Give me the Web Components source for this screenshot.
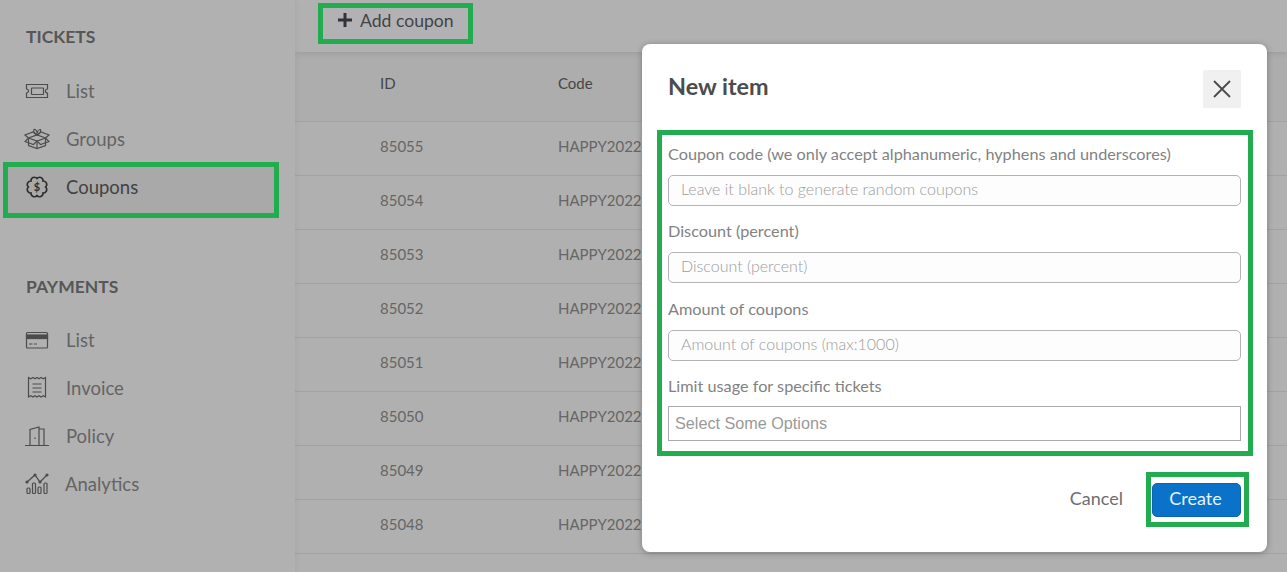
<!DOCTYPE html>
<html>
<head>
<meta charset="utf-8">
<style>
    html, body { margin: 0; height: 100%; overflow: hidden; background: #b0b0b0; font-family: Lato, "Liberation Sans", sans-serif; }
    app-shell { height: 572px; }
</style>
</head>
<body>
<app-shell>
    <side-nav slot="side">
        <nav-heading>TICKETS</nav-heading>
        <nav-item icon="ticket">List</nav-item>
        <nav-item icon="gift">Groups</nav-item>
        <nav-item icon="coupon" active>Coupons</nav-item>
        <nav-heading second>PAYMENTS</nav-heading>
        <nav-item icon="card">List</nav-item>
        <nav-item icon="invoice">Invoice</nav-item>
        <nav-item icon="door">Policy</nav-item>
        <nav-item icon="chart">Analytics</nav-item>
    </side-nav>
    <coupon-table></coupon-table>
    <new-item-modal slot="modal"></new-item-modal>
</app-shell>

<script>
// 图标
const ICONS = {
    ticket: '<path d="M2.500 6.500h21V11a2 2 0 0 0 0 4v4.500h-21V15a2 2 0 0 0 0-4z"/><rect x="7.500" y="10" width="12" height="6.500" rx=".5"/>',
    gift: '<path d="M4.500 12v7.500l8.500 3 8.500-3V12"/><path d="M13 15v7.500M4.500 12l8.500 3 8.500-3-8.500-3z"/><path d="M4.500 12 1 9l8-3 4 3 4-3 8 3-3.500 3M4.500 12 1 15.500l8.500 3L13 15l3.500 3.500 8.500-3-3.500-3.500"/><path d="M13 9c-2.500-1-4-3.500-3-5.500 2-.5 3.500 2 3 5.500zm0 0c0-3 1.500-5.500 3.500-5.500.8 2-.8 4.500-3.500 5.500z"/>',
    coupon: '<path d="M13 4.500A3.400 3.400 0 0 1 19 7 3.400 3.400 0 0 1 21.500 13 3.400 3.400 0 0 1 19 19 3.400 3.400 0 0 1 13 21.500 3.400 3.400 0 0 1 7 19 3.400 3.400 0 0 1 4.500 13 3.400 3.400 0 0 1 7 7 3.400 3.400 0 0 1 13 4.500z"/><text x="13" y="17" text-anchor="middle" font-size="11" font-weight="700" fill="currentColor" stroke="none" font-family="Lato">$</text>',
    card: '<rect x="2.500" y="5.500" width="21" height="15.500" rx="1"/><rect x="2.500" y="8" width="21" height="3.500" fill="currentColor"/><path d="M5 17h3.500M10 17h3"/>',
    invoice: '<path d="M4.500 2.500l2.200 1.200L9 2.500l2 1.200 2-1.200 2 1.200 2-1.200 2.300 1.200 2.200-1.200v19.500l-2.200-1.200-2.300 1.200-2-1.200-2 1.200-2-1.200-2 1.200-2.300-1.200-2.200 1.200z"/><path d="M8.500 9h9M8.500 13h9M8.500 17h9"/>',
    door: '<path d="M1 22.500h24M6 22.500V6.500L15 4v18.500M15 6h5v16.500M11 14.500v1.500"/>',
    chart: '<path d="M3 11l8-7 5 7 7-7"/><circle cx="3" cy="11" r="1" fill="currentColor"/><circle cx="11" cy="4" r="1" fill="currentColor"/><circle cx="16" cy="11" r="1" fill="currentColor"/><circle cx="23" cy="4" r="1" fill="currentColor"/><rect x="3" y="17" width="3" height="5.500" rx="1"/><rect x="8.500" y="12" width="3" height="10.500" rx="1"/><rect x="14" y="16" width="3" height="6.500" rx="1"/><rect x="20" y="12" width="3" height="10.500" rx="1"/>'
};

// 页面骨架
class AppShell extends HTMLElement {
    constructor() {
        super();
        this.attachShadow({mode: 'open'}).innerHTML = `
            <style>
                :host { display: grid; grid-template-columns: 295px 1fr; position: relative; overflow: hidden; }
                ::slotted(new-item-modal) { position: absolute; left: 642px; top: 44px; }
            </style>
            <slot name="side"></slot>
            <slot></slot>
            <slot name="modal"></slot>
        `;
    }
}

class SideNav extends HTMLElement {
    constructor() {
        super();
        this.attachShadow({mode: 'open'}).innerHTML = `
            <style>
                :host { display: flex; flex-direction: column; background: #b1b1b1; box-shadow: 1px 0 6px rgba(0,0,0,.06); z-index: 1; padding-top: 26px; }
            </style>
            <slot></slot>
        `;
    }
}

class NavHeading extends HTMLElement {
    constructor() {
        super();
        this.attachShadow({mode: 'open'}).innerHTML = `
            <style>
                :host { display: block; height: 21px; line-height: 21px; padding-left: 26px; margin-bottom: 20px; font-size: 17.500px; font-weight: 700; color: #575757; }
                :host([second]) { margin-top: 65px; margin-bottom: 19px; }
            </style>
            <slot></slot>
        `;
    }
}

class NavItem extends HTMLElement {
    constructor() {
        super();
        const icon = ICONS[this.getAttribute('icon')] || '';
        this.attachShadow({mode: 'open'}).innerHTML = `
            <style>
                :host { display: flex; align-items: center; gap: 16px; height: 48px; padding-left: 24px; font-size: 18.500px; color: #646464; box-sizing: border-box; }
                :host([icon="chart"]) { gap: 15px; }
                :host([active]) { color: #424242; height: 56px; margin: -1px 0 -7px 3px; width: 276px; padding: 0 0 6px 16px; border: 5px solid #22ab4f; background: #a9a9a9; }
                svg { width: 26px; height: 26px; fill: none; stroke: #4c4c4c; color: #4c4c4c; stroke-width: 1.200; flex: none; }
                :host([active]) svg { stroke: #2e2e2e; color: #2e2e2e; stroke-width: 1.600; }
            </style>
            <svg viewBox="0 0 26 26">${icon}</svg>
            <slot></slot>
        `;
    }
}

class CouponTable extends HTMLElement {
    constructor() {
        super();
        const rows = [85055, 85054, 85053, 85052, 85051, 85050, 85049, 85048];
        this.attachShadow({mode: 'open'}).innerHTML = `
            <style>
                :host { display: block; background: #b0b0b0; min-width: 0; }
                .bar { height: 52px; box-sizing: border-box; padding: 3px 0 0 23px; background: #b1b1b1; box-shadow: 0 1px 6px rgba(0,0,0,.12); position: relative; }
                .add { display: inline-flex; align-items: center; gap: 7px; box-sizing: border-box; width: 155px; height: 41px; padding: 0 0 7px 14px; border: 5px solid #22ab4f; background: #b2b2b4; color: #444; font-size: 17.600px; }
                .add svg { width: 16px; height: 16px; stroke: #333; stroke-width: 3; fill: none; flex: none; }
                .row { display: grid; grid-template-columns: 178px 1fr; height: 54px; padding: 0 0 6px 85px; align-items: center; border-bottom: 1px solid #a2a2a2; box-sizing: border-box; font-size: 15px; color: #666; }
                .head { height: 70px; color: #464646; background: #adadad; padding-bottom: 8px; }
                .code { white-space: nowrap; }
            </style>
            <div class="bar">
                <span class="add"><svg viewBox="0 0 16 16"><path d="M8 1v14M1 8h14"/></svg>Add coupon</span>
            </div>
            <div class="row head"><span>ID</span><span>Code</span></div>
            ${rows.map(id => `<div class="row"><span>${id}</span><span class="code">HAPPY2022</span></div>`).join('')}
        `;
    }
}

class FormField extends HTMLElement {
    constructor() {
        super();
        this.attachShadow({mode: 'open'}).innerHTML = `
            <style>
                :host { display: block; }
                label { display: block; height: 24px; line-height: 24px; font-size: 16.250px; color: #828282; margin-bottom: 9px; white-space: nowrap; }
                .box { box-sizing: border-box; height: 31px; line-height: 25px; padding-left: 12px; border: 1px solid #b4b4b4; border-radius: 5px; background: #fdfdfd; color: #9c9c9c; font-size: 16px; font-weight: 300; }
                :host([select]) label { margin-bottom: 8px; }
                :host([select]) .box { height: 35px; line-height: 32px; padding-left: 6px; border-radius: 0; border-color: #aaa; font-family: "Liberation Sans", sans-serif; font-size: 16.200px; font-weight: 400; color: #999; background: #fff; }
            </style>
            <label>${this.getAttribute('label')}</label>
            <div class="box"><slot></slot></div>
        `;
    }
}

class NewItemModal extends HTMLElement {
    constructor() {
        super();
        this.attachShadow({mode: 'open'}).innerHTML = `
            <style>
                :host { display: flex; flex-direction: column; box-sizing: border-box; width: 625px; height: 508px; background: #fff; border-radius: 8px; box-shadow: 0 1px 6px rgba(0,0,0,.3); font-family: Lato, sans-serif; }
                .top { display: flex; justify-content: space-between; align-items: center; height: 86px; padding: 0 26px; box-sizing: border-box; }
                h2 { margin: -2px 0 0; font-size: 23.400px; font-weight: 700; color: #4c4c4c; }
                .close { width: 38px; height: 38px; margin-top: 4px; background: #f0f0f0; border-radius: 2px; display: flex; align-items: center; justify-content: center; }
                .close svg { width: 18px; height: 18px; stroke: #4a4a4a; stroke-width: 1.800; fill: none; }
                .form { box-sizing: border-box; width: 596px; height: 326px; margin-left: 15px; border: 5px solid #22ab4f; padding: 7px 7px 0 6px; display: flex; flex-direction: column; }
                form-field + form-field { margin-top: 13.300px; }
                .foot { display: flex; justify-content: flex-end; align-items: center; gap: 23px; padding: 16px 18px 0 0; }
                .cancel { font-size: 18px; color: #6e6e6e; margin-bottom: 4px; }
                .create { box-sizing: border-box; width: 103px; height: 55px; border: 5px solid #22ab4f; padding: 6px 3px 5px 1px; background: #fff; }
                .create span { display: block; height: 34px; line-height: 29px; padding-right: 2px; text-align: center; border-radius: 5px; background: #0b72c9; border: 1px solid #0a62b0; box-sizing: border-box; color: #e8f2fb; font-size: 18px; }
            </style>
            <div class="top">
                <h2>New item</h2>
                <span class="close"><svg viewBox="0 0 18 18"><path d="M1 1l16 16M17 1L1 17"/></svg></span>
            </div>
            <div class="form">
                <form-field label="Coupon code (we only accept alphanumeric, hyphens and underscores)">Leave it blank to generate random coupons</form-field>
                <form-field label="Discount (percent)">Discount (percent)</form-field>
                <form-field label="Amount of coupons">Amount of coupons (max:1000)</form-field>
                <form-field select label="Limit usage for specific tickets">Select Some Options</form-field>
            </div>
            <div class="foot">
                <span class="cancel">Cancel</span>
                <div class="create"><span>Create</span></div>
            </div>
        `;
    }
}

customElements.define('app-shell', AppShell);
customElements.define('side-nav', SideNav);
customElements.define('nav-heading', NavHeading);
customElements.define('nav-item', NavItem);
customElements.define('coupon-table', CouponTable);
customElements.define('form-field', FormField);
customElements.define('new-item-modal', NewItemModal);
</script>
</body>
</html>
